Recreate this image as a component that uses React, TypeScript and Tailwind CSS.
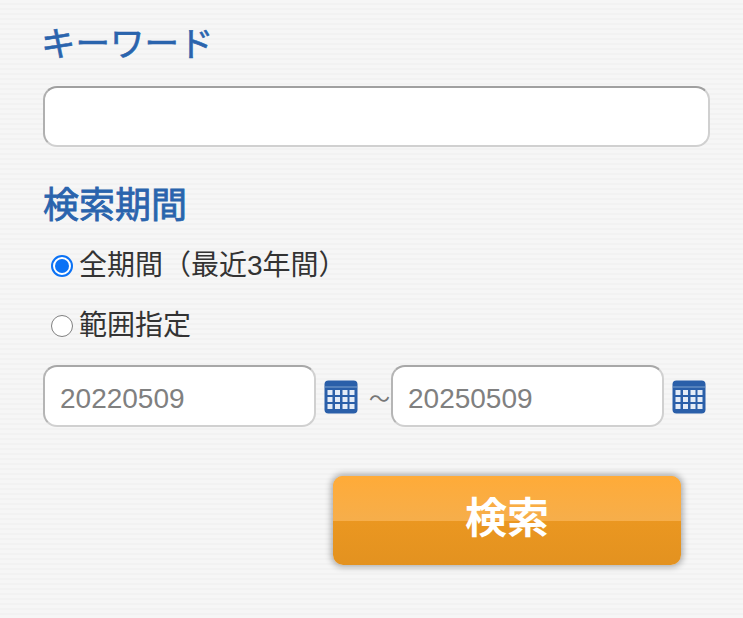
const FONT = "font-['Liberation_Sans','Noto_Sans_CJK_JP',sans-serif]";

function CalendarIcon() {
  return (
    <svg width="34" height="34" viewBox="0 0 34 34" className="shrink-0">
      <rect x="0.5" y="0.5" width="33" height="33" rx="4" fill="#2a5fa9" />
      <rect x="0.5" y="6.5" width="33" height="1" fill="#7fa3d0" />
      {[10, 17, 24].flatMap((y, r) =>
        [3.5, 11, 18.5, 25.5].map((x, c) => (
          <rect key={`${r}-${c}`} x={x} y={y} width="5" height="5" fill="#e4ecf7" />
        )),
      )}
    </svg>
  );
}

function DateInput({ value }: { value: string }) {
  return (
    <div className="flex h-[62px] w-[273px] shrink-0 items-center rounded-[14px] border-2 border-[#d0d0d0] border-t-[#a8a8a8] border-l-[#b5b5b5] bg-white pl-[15px] pt-[5px] text-[28px] text-[#808080]">
      {value}
    </div>
  );
}

export default function App() {
  return (
    <div className={`${FONT} h-[618px] w-[743px] overflow-hidden bg-[repeating-linear-gradient(180deg,#f6f6f6_0px,#f6f6f6_3px,#f2f2f2_3px,#f2f2f2_5px)] pl-[43px] pr-[33px] pt-[21px]`}>
      <h2 className="-ml-[2px] text-[34.5px] leading-[46px] font-normal text-[#2a64ad] [-webkit-text-stroke:0.6px_#2a64ad]">キーワード</h2>
      <input
        type="text"
        className="mt-[19px] block h-[61px] w-full rounded-[14px] border-2 border-[#d0d0d0] border-t-[#a0a0a0] border-l-[#b0b0b0] bg-white"
      />
      <h2 className="mt-[36px] text-[36px] leading-[46px] font-normal text-[#2a64ad] [-webkit-text-stroke:0.8px_#2a64ad]">検索期間</h2>
      <label className="mt-[19px] flex h-[36px] items-center pl-[8px] text-[28px] text-[#333333]">
        <span className="mr-[6px] flex h-[22px] w-[22px] items-center justify-center rounded-full border-2 border-[#0b72f5] bg-white">
          <span className="h-[14px] w-[14px] rounded-full bg-[#0b72f5]" />
        </span>
        全期間（最近3年間）
      </label>
      <label className="mt-[24px] flex h-[36px] items-center pl-[8px] text-[28px] text-[#333333]">
        <span className="mr-[6px] h-[22px] w-[22px] rounded-full border-[1.5px] border-[#808080] bg-white" />
        範囲指定
      </label>
      <div className="mt-[21px] flex items-center">
        <DateInput value="20220509" />
        <span className="ml-[8px] mt-[2px]"><CalendarIcon /></span>
        <span className="mt-[5px] w-[33px] pl-[11px] text-left text-[21px] text-[#777777]">～</span>
        <DateInput value="20250509" />
        <span className="ml-[8px] mt-[2px]"><CalendarIcon /></span>
      </div>
      <div className="mt-[49px] flex justify-end pr-[29px]">
        <button className="relative h-[89px] w-[348px] overflow-hidden rounded-[10px] bg-[linear-gradient(180deg,#f29c21_0%,#e39220_100%)] pb-[4px] text-[42px] font-bold text-white shadow-[0_0_6px_2px_rgba(0,0,0,0.3)]">
          <span className="absolute inset-x-0 top-0 h-[45px] bg-[linear-gradient(180deg,#ffab38_0%,#f6ae4b_100%)]" />
          <span className="relative">検索</span>
        </button>
      </div>
    </div>
  );
}
